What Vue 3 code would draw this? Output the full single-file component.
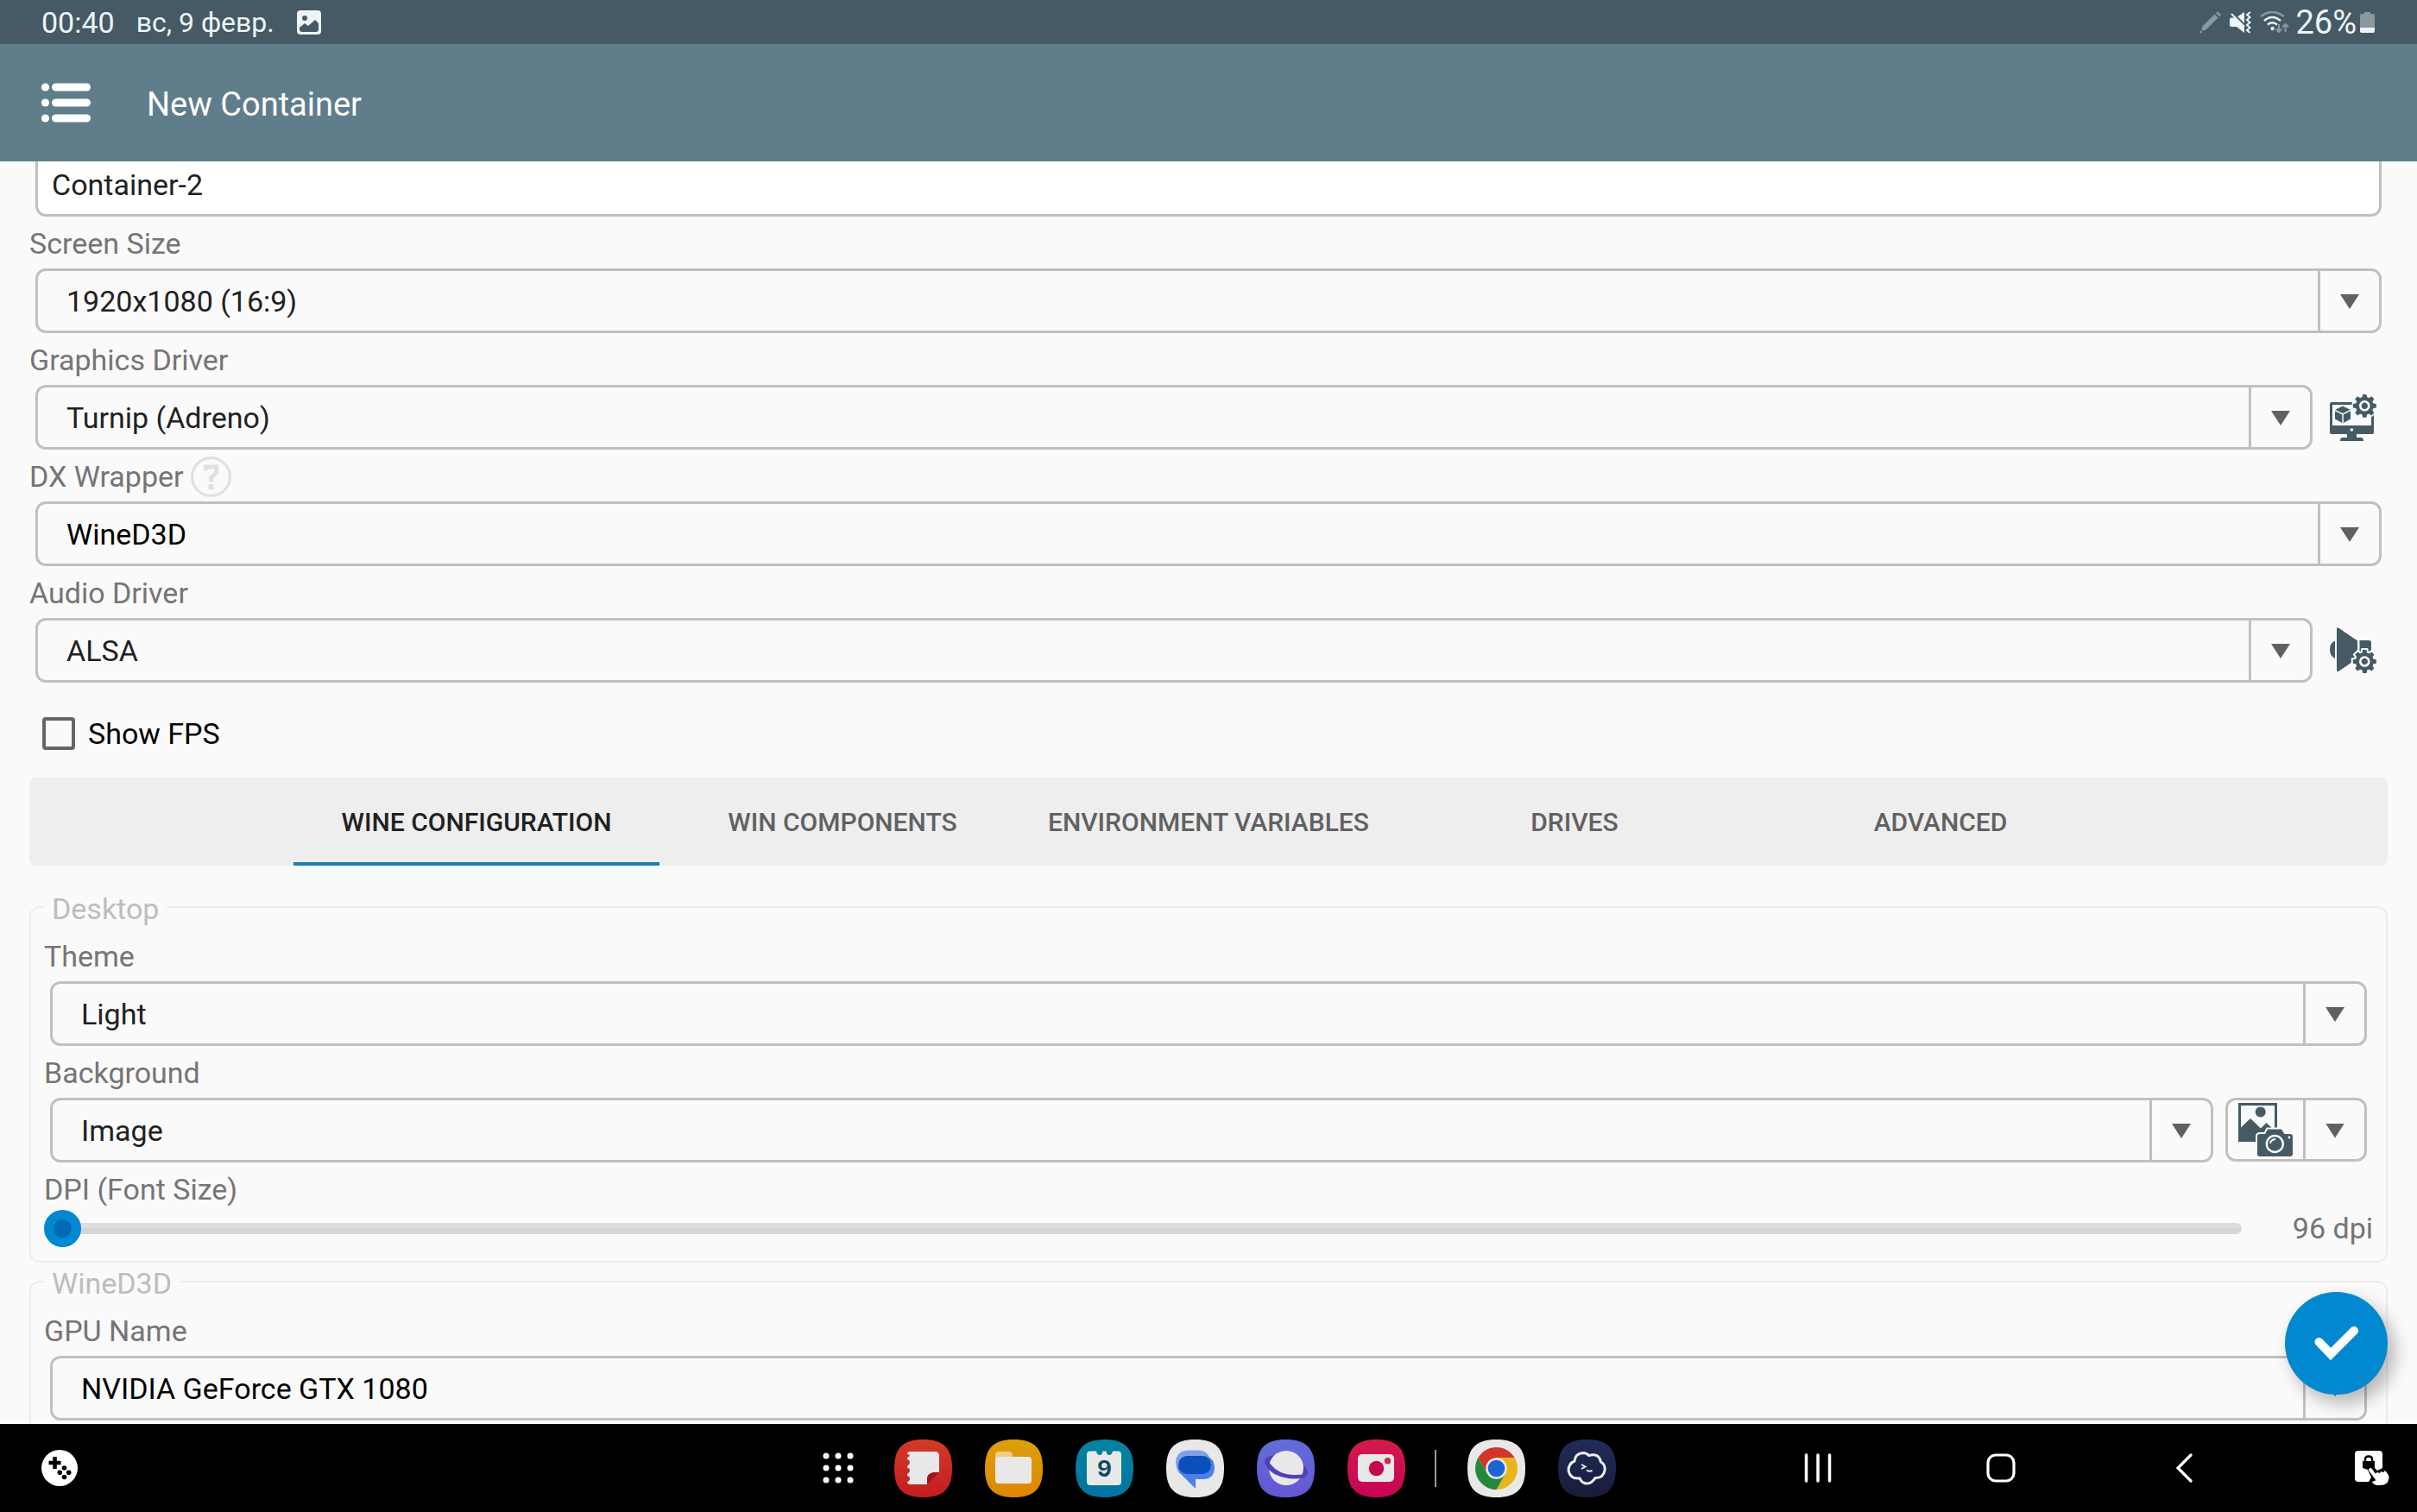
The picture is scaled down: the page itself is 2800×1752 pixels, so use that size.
<template>
  <div class="screen">
    <!-- Android status bar -->
    <div class="status-bar">
      <span class="status-time">00:40</span>
      <span class="status-date">вс, 9 февр.</span>
      <svg class="status-picture" viewBox="0 0 28 28">
        <rect width="28" height="28" rx="4" fill="#eef4f8" />
        <circle cx="9" cy="9" r="3" fill="#455a64" />
        <path d="M3 20 L9 15 L13 18 L21 11 L25 15 V22 Q25 25 22 25 H6 Q3 25 3 22 Z" fill="#455a64" />
      </svg>
      <div class="status-icons">
        <svg width="25" height="26" viewBox="0 0 25 26" fill="#8a999f">
          <path d="M17.500 3.500 L21.500 7.500 L7.500 21.500 L4 22.500 L2.500 21.500 L3.500 17.500 Z" />
          <path d="M19 2 L21 0.500 L25 4 L23 6 Z" />
          <circle cx="1.500" cy="24" r="1.500" />
        </svg>
        <svg width="25" height="26" viewBox="0 0 25 26">
          <path d="M0 9 Q0 7.500 2 7.500 H7 L17 1 V25 L8 18 H2 Q0 18 0 16 Z" fill="#eef4f8" />
          <path d="M0 -1 L19 18" stroke="#455a64" stroke-width="3" />
          <path d="M2 3 L17 18" stroke="#eef4f8" stroke-width="2" />
          <path d="M24 1 L20 4 L23.500 7 L20 10 L23.500 13 L20 16 L23.500 19 L20 22 L23.500 25" fill="none" stroke="#eef4f8" stroke-width="2" />
        </svg>
        <svg width="34" height="26" viewBox="0 0 34 26" fill="none">
          <path d="M1 6 Q14 -4 28 6" stroke="#8a999f" stroke-width="2.500" />
          <path d="M5 11 Q14 3 24 11" stroke="#eef4f8" stroke-width="2.500" />
          <path d="M9 15.500 Q14 11 20 15.500" stroke="#eef4f8" stroke-width="2.500" />
          <circle cx="14.500" cy="20" r="2.200" fill="#eef4f8" />
          <path d="M22 15 V24 M18.500 20.500 L22 24 L25.500 20.500 M29.500 24 V15 M26 18.500 L29.500 15 L33 18.500" stroke="#8a999f" stroke-width="2" />
        </svg>
        <span class="battery-text">26%</span>
        <svg width="17" height="24" viewBox="0 0 17 24">
          <path d="M5 0 H12 V2 H15 Q17 2 17 4 V19 H0 V4 Q0 2 2 2 H5 Z" fill="#8a999f" />
          <path d="M0 18 H17 V22 Q17 24 15 24 H2 Q0 24 0 22 Z" fill="#eef4f8" />
        </svg>
      </div>
    </div>

    <header class="app-bar">
      <button class="menu-btn" aria-label="Menu">
        <svg width="57" height="46" viewBox="0 0 57 46" fill="#fff">
          <template v-for="y in [5, 23, 41]" :key="y">
            <circle cx="4.500" :cy="y" r="4.600" />
            <rect x="12" :y="y - 4.6" width="45" height="9.200" rx="4.600" />
          </template>
        </svg>
      </button>
      <h1>New Container</h1>
    </header>

    <main class="content">
      <div class="form">
        <input v-model="form.name" class="name-input" type="text" aria-label="Name" />

        <div v-for="field in fields" :key="field.id">
          <div class="label-row">
            <label :for="field.id">{{ field.label }}</label>
            <button v-if="field.help" class="help-btn" aria-label="Help">
              <svg width="47" height="47" viewBox="0 0 47 47" fill="none" stroke="#e0e0e0">
                <circle cx="23.500" cy="23.500" r="22" stroke-width="3" />
                <path d="M17.500 16 V12 H29.500 V19 L23.500 24.500 V29.500" stroke-width="5" />
                <path d="M20.500 35 H26.500" stroke-width="6" />
              </svg>
            </button>
          </div>
          <div class="field-row">
            <div class="spinner">
              <select :id="field.id" v-model="form[field.id]" :class="{ dark: field.dark }">
                <option>{{ form[field.id] }}</option>
              </select>
              <span class="spinner-arrow"></span>
            </div>
            <button v-if="field.config" class="config-btn" :aria-label="field.label + ' configuration'">
              <!-- monitor with cube -->
              <svg v-if="field.config === 'graphics'" width="54" height="54" viewBox="0 0 54 54" fill="#455a64">
                <path fill-rule="evenodd" d="M2 9 H49 Q51 9 51 11 V44 Q51 46 49 46 H31 V50 H36 Q39 50 39 54 H12 Q12 50 15 50 H20 V46 H2 Q0 46 0 44 V11 Q0 9 2 9 Z M3 12 V36 H48 V12 Z" />
                <circle cx="25.300" cy="41" r="1.800" fill="#fafafa" />
                <path d="M15 13.500 L24 18 V28.500 L15 33.500 L6 28.500 V18 Z" />
                <path d="M6 18.300 L15 23 L24 18.300 M15 23 V34" fill="none" stroke="#fafafa" stroke-width="1.500" />
                <g transform="translate(40.300 13.300)">
                  <circle r="15" fill="#fafafa" />
                  <circle r="10.500" />
                  <path v-for="a in gearAngles" :key="a" d="M-3 -9 L-2.200 -13.500 H2.200 L3 -9 Z" :transform="`rotate(${a})`" />
                  <circle r="5" fill="#455a64" stroke="#fafafa" stroke-width="2.600" />
                </g>
              </svg>
              <!-- loudspeaker -->
              <svg v-else width="54" height="54" viewBox="0 0 54 54" fill="#455a64">
                <path d="M6 15.500 Q0 18 0 25.500 Q0 33 6 36 Z" />
                <path d="M8 1 Q8 0 10 0.500 L32 15.500 V36 L10 51 Q8 51.500 8 50 Z" />
                <path d="M34.500 15 H45 Q48 15 48 18 V34 H34.500 Z" />
                <g transform="translate(40.300 39.500)">
                  <g stroke="#fafafa" stroke-width="4">
                    <circle r="10.500" />
                    <path v-for="a in gearAngles" :key="a" d="M-3 -9 L-2.200 -13.500 H2.200 L3 -9 Z" :transform="`rotate(${a})`" />
                  </g>
                  <circle r="10.500" />
                  <path v-for="a in gearAngles" :key="a" d="M-3 -9 L-2.200 -13.500 H2.200 L3 -9 Z" :transform="`rotate(${a})`" />
                  <circle r="5" fill="#455a64" stroke="#fafafa" stroke-width="2.600" />
                </g>
              </svg>
            </button>
          </div>
        </div>

        <label class="check-row">
          <input v-model="form.showFps" type="checkbox" />
          <span>Show FPS</span>
        </label>

        <div class="tabs" role="tablist">
          <button
            v-for="tab in tabs"
            :key="tab"
            role="tab"
            :aria-selected="tab === activeTab"
            :class="['tab', { active: tab === activeTab }]"
            @click="activeTab = tab"
          >
            {{ tab }}
          </button>
        </div>

        <fieldset class="group">
          <legend>Desktop</legend>
          <div class="label-row"><label for="theme">Theme</label></div>
          <div class="spinner">
            <select id="theme" v-model="form.theme"><option>Light</option></select>
            <span class="spinner-arrow"></span>
          </div>

          <div class="label-row"><label for="background">Background</label></div>
          <div class="field-row">
            <div class="spinner">
              <select id="background" v-model="form.background"><option>Image</option></select>
              <span class="spinner-arrow"></span>
            </div>
            <button class="image-picker" aria-label="Choose image">
              <span class="picker-icon">
                <svg width="63" height="63" viewBox="0 0 63 63" fill="#455a64">
                  <rect x="1.500" y="1.500" width="42" height="42" fill="none" stroke="#455a64" stroke-width="3" />
                  <circle cx="25.700" cy="10.500" r="6" />
                  <path d="M2 29.500 L14 18 L26 29.500 L32.500 23 L40 30 V44 H2 Z" />
                  <path d="M25 36 H31 L34 30.500 H50 L53.500 36 H60 Q63 36 63 39 V59 Q63 62 60 62 H25 Q22 62 22 59 V39 Q22 36 25 36 Z" stroke="#fafafa" stroke-width="4" />
                  <path d="M25 36 H31 L34 30.500 H50 L53.500 36 H60 Q63 36 63 39 V59 Q63 62 60 62 H25 Q22 62 22 59 V39 Q22 36 25 36 Z" />
                  <circle cx="42.300" cy="47.500" r="9.500" fill="none" stroke="#fafafa" stroke-width="2.400" />
                  <path d="M37 47 Q37.500 42.500 43 42" fill="none" stroke="#fafafa" stroke-width="1.800" />
                  <circle cx="59" cy="40" r="1.400" fill="#fafafa" />
                </svg>
              </span>
              <span class="spinner-arrow"></span>
            </button>
          </div>

          <div class="label-row"><label for="dpi">DPI (Font Size)</label></div>
          <div class="slider-row">
            <input id="dpi" v-model="form.dpi" type="range" min="96" max="480" />
            <output for="dpi">{{ form.dpi }} dpi</output>
          </div>
        </fieldset>

        <fieldset class="group">
          <legend>WineD3D</legend>
          <div class="label-row"><label for="gpu">GPU Name</label></div>
          <div class="spinner">
            <select id="gpu" v-model="form.gpu" class="dark"><option>NVIDIA GeForce GTX 1080</option></select>
            <span class="spinner-arrow"></span>
          </div>
        </fieldset>
      </div>

      <button class="fab" aria-label="Save">
        <svg width="52" height="42" viewBox="0 0 52 42">
          <path d="M5.500 19 L19 33 L46 6" fill="none" stroke="#fff" stroke-width="10" stroke-linecap="round" />
        </svg>
      </button>
    </main>

    <!-- System navigation and task bar -->
    <nav class="nav-bar">
      <button class="nav-game" aria-label="Game controls">
        <svg width="42" height="42" viewBox="0 0 42 42">
          <circle cx="21" cy="21" r="21" fill="#fff" />
          <path d="M15.500 8 V22 M8.500 15 H22.500" stroke="#000" stroke-width="4.500" />
          <circle cx="26.500" cy="21" r="2.800" />
          <circle cx="26.500" cy="31.500" r="2.800" />
          <circle cx="21.300" cy="26.200" r="2.800" />
          <circle cx="31.700" cy="26.200" r="2.800" />
        </svg>
      </button>

      <div class="dock">
        <button class="apps-btn" aria-label="All apps">
          <svg width="36" height="36" viewBox="0 0 36 36" fill="#fff">
            <circle v-for="n in 9" :key="n" :cx="4 + ((n - 1) % 3) * 14" :cy="4 + Math.floor((n - 1) / 3) * 14" r="3.500" />
          </svg>
        </button>

        <template v-for="app in dockApps" :key="app.id">
          <span v-if="app.id === 'chrome'" class="dock-divider"></span>
          <button :aria-label="app.title">
            <svg width="67" height="67" viewBox="0 0 67 67">
              <defs>
                <linearGradient :id="'bg-' + app.id" x1="0" y1="0" x2="0" y2="1">
                  <stop offset="0" :stop-color="app.from" />
                  <stop offset="1" :stop-color="app.to" />
                </linearGradient>
              </defs>
              <path d="M33.500 0 C57 0 67 10 67 33.500 S57 67 33.500 67 S0 57 0 33.500 S10 0 33.500 0 Z" :fill="`url(#bg-${app.id})`" />

              <g v-if="app.id === 'notes'">
                <path d="M19 14 H47 Q52 14 52 19 V38 H46 Q38 39 38 46 V52 H19 Q15 52 15 49 Q18 48 18 45.500 Q18 43 15 42 V40 Q18 38.500 18 36 Q18 33.500 15 32.500 V30.500 Q18 29 18 26.500 Q18 24 15 23 V21 Q18 20 18 18 Q15 17.500 15 16 Q15.500 14 19 14 Z" fill="#e8e8e8" />
                <path d="M52 38 H46 Q38 39 38 46 V52 Z" fill="#9e1420" />
              </g>
              <g v-else-if="app.id === 'files'">
                <path d="M12 24 V18 Q12 14 16 14 H28 Q32 14 32 18 V24 Z" fill="#efcb84" />
                <rect x="12" y="20" width="42" height="31" rx="4" fill="#e8e8e8" />
              </g>
              <g v-else-if="app.id === 'calendar'">
                <path d="M17 13.500 H24 Q25 18 28 18 Q31 18 31.500 13.500 H35.500 Q36 18 39 18 Q42 18 43 13.500 H49 Q53 13.500 53 17.500 V49 Q53 53 49 53 H17 Q13 53 13 49 V17.500 Q13 13.500 17 13.500 Z" fill="#e8e8e8" />
                <text x="33.500" y="43" class="calendar-day">9</text>
              </g>
              <g v-else-if="app.id === 'messages'">
                <path d="M26 12.500 H37 Q51 13 51 27 L34 40 H16 Q11 34 11 27 Q11 13 26 12.500 Z" fill="#7f9fe8" />
                <path d="M25 19 H46 Q56 22 56 32 Q56 46 42 46 H34 V57 L18 41 Q13 36 14 30 Z" fill="#4f7fe8" />
                <rect x="14" y="19" width="38" height="21" rx="10.500" fill="#0a4fbb" />
              </g>
              <g v-else-if="app.id === 'internet'">
                <ellipse cx="34" cy="32" rx="26" ry="11.500" transform="rotate(18 34 32)" fill="#5340b8" />
                <circle cx="34" cy="33" r="20" fill="#e8e8e8" />
                <path d="M12 23 Q20 37 34 40 Q44 42 56 40 L53 44 Q44 47 32 44 Q14 40 10 28 Z" fill="#5340b8" />
              </g>
              <g v-else-if="app.id === 'camera'">
                <rect x="12" y="17" width="42" height="32" rx="5" fill="#e8e8e8" />
                <circle cx="33.500" cy="33.500" r="8.700" fill="#c40850" />
                <circle cx="46.500" cy="24.700" r="3.700" fill="#cc2a50" />
              </g>
              <g v-else-if="app.id === 'chrome'" transform="translate(33.500 33.500)">
                <path d="M-21.200 -12.250 A24.500 24.500 0 0 1 21.200 -12.250 L0 -12.250 L-10.600 6.100 Z" fill="#d3352a" />
                <path d="M21.200 -12.250 A24.500 24.500 0 0 1 0 24.500 L10.600 6.100 L0 -12.250 Z" fill="#eab41c" />
                <path d="M0 24.500 A24.500 24.500 0 0 1 -21.200 -12.250 L-10.600 6.100 L10.600 6.100 Z" fill="#24883f" />
                <circle r="12.250" fill="#e8e8e8" />
                <circle r="9.800" fill="#1b66d2" />
              </g>
              <g v-else fill="none" stroke="#eceef4">
                <path d="M19 25 Q20 16 29 15.500 Q33 15.500 35.500 18.500 Q47 15 49.500 26 Q55 29 54 36 Q52 45 43 44.500 Q39 51 33.500 51 Q28 51 25 45 Q14 46 12 36 Q12 28 19 25 Z" stroke-width="3" />
                <path d="M27 29 L31.500 31.500 L27 34" stroke-width="2" />
                <path d="M33 35.500 Q36 37.500 39.500 36" stroke-width="2" />
              </g>
            </svg>
          </button>
        </template>
      </div>

      <div class="system-keys">
        <button aria-label="Recents">
          <svg width="34" height="34" viewBox="0 0 34 34">
            <path d="M3.500 2 V32 M17 2 V32 M30.500 2 V32" stroke="#fff" stroke-width="3.500" stroke-linecap="round" />
          </svg>
        </button>
        <button aria-label="Home">
          <svg width="34" height="34" viewBox="0 0 34 34">
            <rect x="2" y="2" width="30" height="30" rx="9" fill="none" stroke="#fff" stroke-width="3.200" />
          </svg>
        </button>
        <button aria-label="Back">
          <svg width="20" height="34" viewBox="0 0 20 34">
            <path d="M18 2 L3 17 L18 32" fill="none" stroke="#fff" stroke-width="3.200" stroke-linecap="round" />
          </svg>
        </button>
        <button class="lock-btn" aria-label="Touch lock">
          <svg width="40" height="41" viewBox="0 0 40 41">
            <path d="M4 0 H28 Q32 0 32 4 V30 H20 V36 H4 Q0 36 0 32 V4 Q0 0 4 0 Z" fill="#fff" />
            <path d="M9 12 H23 V20 L26 23 L32 20 V28 L20 37 L16 36 L19 31 L15 22 L9 20 Z" fill="#000" />
            <path d="M12 13 V10 Q12 6.500 16 6.500 Q20 6.500 20 10 V13" fill="none" stroke="#000" stroke-width="2.500" />
            <path d="M18 22 L26 33" stroke="#fff" stroke-width="4" stroke-linecap="round" />
            <path d="M23 27 L26 25 L29 26 L30 24 L33 25 L35 23 Q40 28 39.500 32 Q38 40 30 40 H26 Q21 39 20 36 L25 34 Z" fill="#fff" />
          </svg>
        </button>
      </div>
    </nav>
  </div>
</template>

<script setup>
import { ref, reactive } from 'vue'

const form = reactive({
  name: 'Container-2',
  screenSize: '1920x1080 (16:9)',
  graphicsDriver: 'Turnip (Adreno)',
  dxWrapper: 'WineD3D',
  audioDriver: 'ALSA',
  showFps: false,
  theme: 'Light',
  background: 'Image',
  dpi: 96,
  gpu: 'NVIDIA GeForce GTX 1080'
})

const fields = [
  { id: 'screenSize', label: 'Screen Size' },
  { id: 'graphicsDriver', label: 'Graphics Driver', config: 'graphics' },
  { id: 'dxWrapper', label: 'DX Wrapper', help: true, dark: true },
  { id: 'audioDriver', label: 'Audio Driver', config: 'audio' }
]

const tabs = ['Wine Configuration', 'Win Components', 'Environment Variables', 'Drives', 'Advanced']
const activeTab = ref(tabs[0])

const gearAngles = [0, 45, 90, 135, 180, 225, 270, 315]

const dockApps = [
  { id: 'notes', title: 'Notes', from: '#d43a26', to: '#c41c20' },
  { id: 'files', title: 'My Files', from: '#dca00c', to: '#de8600' },
  { id: 'calendar', title: 'Calendar', from: '#0484a0', to: '#0074a0' },
  { id: 'messages', title: 'Messages', from: '#e8e8e8', to: '#e8e8e8' },
  { id: 'internet', title: 'Internet', from: '#626ed8', to: '#6656d6' },
  { id: 'camera', title: 'Camera', from: '#d21c4c', to: '#c60456' },
  { id: 'chrome', title: 'Chrome', from: '#e8e8e8', to: '#e8e8e8' },
  { id: 'terminal', title: 'Terminal', from: '#222c5a', to: '#181c38' }
]
</script>

<style>
body {
  margin: 0;
  background: #fafafa;
}
</style>

<style scoped>
.screen {
  height: 100vh;
  display: flex;
  flex-direction: column;
  background: #fafafa;
  color: #212121;
  font-family: Roboto, sans-serif;
  font-size: 34px;
}

.screen * {
  box-sizing: border-box;
}

svg {
  display: block;
  flex: none;
}

button {
  background: none;
  border: none;
  padding: 0;
  font: inherit;
  color: inherit;
  display: flex;
  align-items: center;
  justify-content: center;
  cursor: pointer;
}

/* Status bar */
.status-bar {
  height: 51px;
  flex: none;
  background: #455a64;
  color: #eef4f8;
  display: flex;
  align-items: center;
  padding: 0 49px 0 48px;
}

.status-date {
  margin-left: 25px;
  font-size: 32px;
}

.status-picture {
  width: 28px;
  height: 28px;
  margin-left: 26px;
}

.status-icons {
  margin-left: auto;
  display: flex;
  align-items: center;
  gap: 10px;
}

.battery-text {
  font-size: 38px;
  line-height: 48px;
  margin: 0 -6px 0 -3px;
}

/* App bar */
.app-bar {
  height: 136px;
  flex: none;
  background: #607d8b;
  color: #fff;
  display: flex;
  align-items: center;
  gap: 65px;
  padding: 0 48px;
}

.app-bar h1 {
  margin: 0;
  font-size: 38px;
  line-height: 48px;
  font-weight: 400;
  padding-top: 4px;
}

/* Scrolled form */
.content {
  flex: 1;
  min-height: 0;
  position: relative;
  overflow: hidden;
}

.form {
  padding: 0 34px 34px;
}

.name-input {
  display: block;
  width: calc(100% - 14px);
  height: 75px;
  margin: -11px 7px 0;
  padding: 0 16px;
  border: 3px solid #c0c0c0;
  border-radius: 12px;
  background: #fff;
  font: inherit;
  color: #212121;
}

.label-row {
  height: 60px;
  padding-top: 2px;
  display: flex;
  align-items: center;
  gap: 8px;
  line-height: 58px;
  color: #757575;
}

.field-row {
  display: flex;
  align-items: flex-start;
}

.spinner {
  flex: 1;
  height: 75px;
  margin: 0 7px;
  display: grid;
  grid-template-columns: 1fr 71px;
  border: 3px solid #c0c0c0;
  border-radius: 12px;
}

.spinner select {
  grid-area: 1 / 1 / 2 / 3;
  appearance: none;
  border: none;
  background: none;
  padding: 0 80px 0 33px;
  font: inherit;
  color: #212121;
}

.spinner select.dark {
  color: #000;
}

.spinner-arrow {
  grid-area: 1 / 2 / 2 / 3;
  border-left: 3px solid #c0c0c0;
  display: flex;
  align-items: center;
  justify-content: center;
  padding-top: 2px;
  pointer-events: none;
}

.spinner-arrow::before {
  content: '';
  width: 22px;
  height: 17px;
  background: #616161;
  clip-path: polygon(0 0, 100% 0, 50% 100%);
}

.config-btn {
  width: 80px;
  height: 75px;
}

.image-picker {
  width: 164px;
  height: 74px;
  margin: 0 7px;
  display: grid;
  grid-template-columns: 1fr 71px;
  align-items: stretch;
  border: 3px solid #c0c0c0;
  border-radius: 12px;
}

.picker-icon {
  display: flex;
  align-items: center;
  justify-content: center;
}

.check-row {
  height: 110px;
  padding: 8px 15px 0;
  display: flex;
  align-items: center;
  gap: 15px;
  color: #000;
}

.check-row input {
  appearance: none;
  width: 38px;
  height: 38px;
  margin: 0;
  border: 4px solid #666;
  border-radius: 4px;
}

.check-row input:checked {
  background: #0288d1;
  border-color: #0288d1;
}

/* Tabs */
.tabs {
  height: 102px;
  display: flex;
  justify-content: center;
  background: #eee;
  border-radius: 8px;
  margin-bottom: 26px;
}

.tab {
  flex: 1;
  max-width: 424px;
  border-top: 4px solid transparent;
  border-bottom: 4px solid transparent;
  font-size: 30px;
  font-weight: 500;
  text-transform: uppercase;
  white-space: nowrap;
  color: #616161;
}

.tab.active {
  color: #212121;
  border-bottom-color: #1a7fb5;
}

/* Field groups */
.group {
  margin: 0;
  min-width: 0;
  padding: 4px 15px 22px;
  border: 2px solid #ececec;
  border-radius: 12px;
}

.group legend {
  padding: 4px 9px 0;
  line-height: 40px;
  color: #bdbdbd;
}

.slider-row {
  height: 32px;
  display: flex;
  align-items: center;
}

.slider-row input {
  appearance: none;
  flex: 1;
  height: 43px;
  margin: 0;
  background: none;
}

.slider-row input::-webkit-slider-runnable-track {
  height: 13px;
  border-radius: 7px;
  background: linear-gradient(#dedede 50%, #d6d6d6 50%);
}

.slider-row input::-webkit-slider-thumb {
  appearance: none;
  width: 43px;
  height: 43px;
  margin-top: -15px;
  border: 11px solid #0288d1;
  border-radius: 50%;
  background: #0269b4;
}

.slider-row output {
  width: 152px;
  text-align: right;
  color: #757575;
}

.fab {
  position: absolute;
  right: 34px;
  bottom: 34px;
  width: 119px;
  height: 119px;
  border-radius: 50%;
  background: #0288d1;
  box-shadow: 8px 10px 20px rgba(0, 0, 0, 0.28);
}

/* Navigation bar */
.nav-bar {
  height: 102px;
  flex: none;
  background: #000;
  display: grid;
  grid-template-columns: 1fr auto 1fr;
  align-items: center;
  padding: 0 32px 0 48px;
}

.nav-game {
  justify-self: start;
}

.dock {
  display: flex;
  align-items: center;
  gap: 38px;
}

.apps-btn {
  width: 53px;
}

.dock-divider {
  width: 2px;
  height: 43px;
  margin: 0 -2px 0 -4px;
  background: #9a9a9a;
}

.calendar-day {
  font-family: Inter, sans-serif;
  font-size: 26px;
  font-weight: 700;
  text-anchor: middle;
  fill: #0d4a63;
}

.system-keys {
  display: flex;
  justify-content: flex-end;
}

.system-keys button {
  width: 212px;
}

.system-keys .lock-btn {
  width: 40px;
  margin-left: 92px;
}
</style>
